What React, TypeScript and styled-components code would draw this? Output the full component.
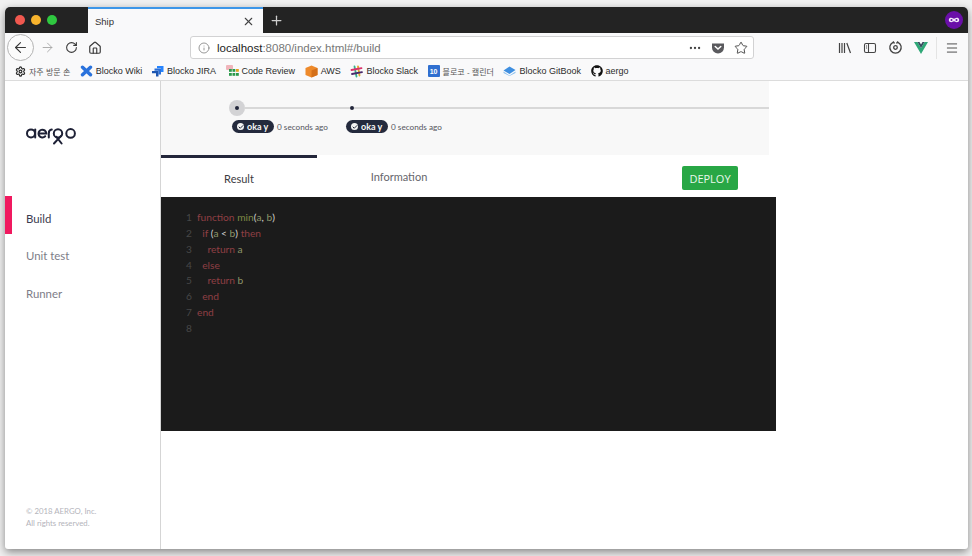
import React from "react";
import styled, { createGlobalStyle } from "styled-components";
import {
  ArrowLeft,
  ArrowRight,
  Check,
  Ellipsis,
  Home,
  Info,
  Menu,
  Plus,
  RotateCw,
  Settings,
  Star,
  X,
} from "lucide-react";
import { FaGithub } from "react-icons/fa";

const GlobalStyle = createGlobalStyle`
  html, body {
    margin: 0;
    height: 556px;
    overflow: hidden;
    background: #f1f1f1;
  }
  * {
    box-sizing: border-box;
  }
`;

const Page = styled.div`
  width: 972px;
  height: 556px;
  padding: 7px 4px 7px 5px;
  font-family: "Lato", "Liberation Sans", sans-serif;
`;

const Window = styled.div`
  height: 542px;
  display: flex;
  flex-direction: column;
  background: #fff;
  border-radius: 5px 5px 3px 3px;
  overflow: hidden;
  box-shadow: 0 3px 9px rgba(0, 0, 0, 0.45);
`;

const TabStrip = styled.div`
  height: 26px;
  flex: none;
  display: flex;
  align-items: stretch;
  background: #232323;
`;

const Lights = styled.div`
  width: 83px;
  display: flex;
  align-items: center;
  gap: 6px;
  padding-left: 10px;
`;

const Light = styled.span<{ $color: string }>`
  width: 10px;
  height: 10px;
  border-radius: 50%;
  background: ${({ $color }) => $color};
`;

const Tab = styled.div`
  width: 175px;
  display: flex;
  align-items: center;
  justify-content: space-between;
  padding: 0 8px 0 7px;
  background: #f9f9fa;
  border-top: 2px solid #3d96e8;
  font-size: 9.5px;
  color: #333;
  font-family: "Liberation Sans", sans-serif;
`;

const NewTab = styled.div`
  width: 26px;
  display: flex;
  align-items: center;
  justify-content: center;
  color: #cfcfcf;
`;

const MaskSlot = styled.div`
  margin-left: auto;
  padding-right: 5px;
  display: flex;
  align-items: center;
`;

const Toolbar = styled.div`
  height: 29px;
  flex: none;
  display: flex;
  align-items: center;
  background: #f9f9fa;
  color: #3a3a3a;
`;

const BackButton = styled.div`
  width: 27px;
  height: 27px;
  margin-left: 2px;
  flex: none;
  display: flex;
  align-items: center;
  justify-content: center;
  border: 1px solid #b3b3b3;
  border-radius: 50%;
  background: #fbfbfb;
`;

const NavIcons = styled.div`
  width: 68px;
  padding-left: 6px;
  display: flex;
  align-items: center;
  gap: 10px;
`;

const ForwardIcon = styled(ArrowRight)`
  color: #a9a9a9;
`;

const UrlBar = styled.div`
  width: 564px;
  height: 23px;
  margin-left: 88px;
  flex: none;
  display: flex;
  align-items: center;
  padding: 0 5px 0 7px;
  background: #fff;
  border: 1px solid #d2d2d3;
  border-radius: 3px;
  font-size: 11px;
  font-family: "Liberation Sans", sans-serif;
  color: #777;
`;

const UrlText = styled.span`
  margin-left: 7px;
  font-size: 11.5px;
  flex: 1;
`;

const UrlHost = styled.span`
  color: #222;
`;

const UrlActions = styled.div`
  display: flex;
  align-items: center;
  gap: 9px;
  color: #444;
`;

const ToolIcons = styled.div`
  margin-left: auto;
  display: flex;
  align-items: center;
  gap: 11px;
  padding-right: 9px;
  color: #444;
`;

const ToolDivider = styled.span`
  width: 1px;
  height: 22px;
  margin: 0 -3px;
  background: #e4e4e4;
`;

const Bookmarks = styled.div`
  height: 19px;
  flex: none;
  display: flex;
  align-items: center;
  padding-left: 10px;
  gap: 9.6px;
  background: #f9f9fa;
  border-bottom: 1px solid #dcdcdc;
  font-size: 9px;
  color: #2b2b2b;
  font-family: "Liberation Sans", "Noto Sans CJK KR", sans-serif;
`;

const Bookmark = styled.span`
  display: flex;
  align-items: center;
  gap: 3px;
  white-space: nowrap;
`;

const KoreanLabel = styled.span`
  font-size: 8px;
  color: #555;
`;

const Body = styled.div`
  flex: 1;
  min-height: 0;
  display: flex;
`;

const Sidebar = styled.aside`
  width: 156px;
  flex: none;
  display: flex;
  flex-direction: column;
  border-right: 1px solid #d5d5d5;
  padding-bottom: 20px;
`;

const LogoSlot = styled.div`
  height: 115px;
  padding: 46px 0 0 21px;
  flex: none;
`;

const NavList = styled.nav`
  display: flex;
  flex-direction: column;
`;

const NavItem = styled.div<{ $active?: boolean }>`
  height: 37.5px;
  display: flex;
  align-items: center;
  padding: 7px 0 0 ${({ $active }) => ($active ? "14px" : "21px")};
  font-size: 11.4px;
  color: ${({ $active }) => ($active ? "#3b3b4e" : "#7d7d88")};
  border-left: ${({ $active }) => ($active ? "7px solid #f0195f" : "none")};
`;

const Copyright = styled.div`
  margin-top: auto;
  padding-left: 21px;
  font-size: 7.8px;
  line-height: 12px;
  color: #b4b4bb;
`;

const Main = styled.main`
  width: 615px;
  flex: none;
  display: flex;
  flex-direction: column;
`;

const TimelinePanel = styled.section`
  width: 608px;
  height: 74px;
  flex: none;
  padding: 19px 0 0 68px;
  background: #f8f8f8;
`;

const Track = styled.div`
  height: 16px;
  display: flex;
  align-items: center;
`;

const BigDot = styled.span`
  width: 16px;
  height: 16px;
  flex: none;
  display: flex;
  align-items: center;
  justify-content: center;
  border-radius: 50%;
  background: #d3d3d5;

  &::after {
    content: "";
    width: 4px;
    height: 4px;
    border-radius: 50%;
    background: #22263a;
  }
`;

const SmallDot = styled.span`
  width: 4px;
  height: 4px;
  flex: none;
  border-radius: 50%;
  background: #22263a;
`;

const Connector = styled.span<{ $width?: number }>`
  height: 2px;
  background: #d8d8d8;
  ${({ $width }) => ($width ? `width: ${$width}px; flex: none;` : "flex: 1;")}
`;

const StepRow = styled.div`
  margin-top: 4px;
  padding-left: 3px;
  display: flex;
`;

const Step = styled.div`
  width: 114px;
  display: flex;
  align-items: center;
  gap: 3px;
`;

const Badge = styled.span`
  width: 42px;
  height: 13px;
  flex: none;
  display: flex;
  align-items: center;
  gap: 3px;
  padding-left: 5px;
  border-radius: 7px;
  background: #242a3d;
  color: #f7f7f7;
  font-size: 9px;
  font-weight: 700;
  white-space: nowrap;
`;

const BadgeCheck = styled.span`
  width: 7px;
  height: 7px;
  flex: none;
  display: flex;
  align-items: center;
  justify-content: center;
  border-radius: 50%;
  background: #f3f3f3;
  color: #242a3d;
`;

const Ago = styled.span`
  font-size: 8.2px;
  color: #55555d;
  white-space: nowrap;
`;

const TabBar = styled.div`
  height: 42px;
  flex: none;
  display: flex;
`;

const ResultTab = styled.div<{ $active?: boolean }>`
  width: 156px;
  display: flex;
  align-items: center;
  justify-content: center;
  font-size: 11px;
  padding-top: ${({ $active }) => ($active ? "1px" : "0")};
  color: ${({ $active }) => ($active ? "#3b3b3f" : "#66666c")};
  border-top: ${({ $active }) => ($active ? "3px solid #23263a" : "none")};
  margin-left: ${({ $active }) => ($active ? "0" : "4px")};
`;

const TabSpacer = styled.div`
  flex: 1;
  display: flex;
  align-items: center;
  justify-content: flex-end;
  padding: 4px 38px 0 0;
`;

const DeployButton = styled.button`
  width: 56px;
  height: 24px;
  padding: 0;
  border: none;
  border-radius: 2px;
  background: #28a745;
  color: #e9f7ec;
  font-family: "Open Sans", "Liberation Sans", sans-serif;
  font-size: 11px;
`;

const Editor = styled.section`
  height: 234px;
  flex: none;
  padding-top: 12.5px;
  background: #1b1b1b;
  font-size: 10.2px;
`;

const CodeLine = styled.div`
  height: 15.75px;
  display: flex;
  align-items: center;
  white-space: pre;
`;

const LineNo = styled.span`
  width: 36px;
  padding-right: 5px;
  flex: none;
  text-align: right;
  color: #474747;
`;

const Kw = styled.span`
  color: #8f3f44;
`;

const Fn = styled.span`
  color: #7d8a45;
`;

const Pun = styled.span`
  color: #d4d4d4;
`;

const Var = styled.span`
  color: #8d9468;
`;

// aergo wordmark, drawn to the reference's shapes
const AergoLogo = () => (
  <svg width="51" height="19" viewBox="0 0 51 19" fill="none" stroke="#1e2136" strokeWidth="2" strokeLinecap="round">
    <circle cx="5" cy="6.4" r="4" />
    <path d="M9.2 2.4v8.2" />
    <path d="M12.7 6.4h7.6a3.9 3.9 0 1 0-1.1 2.9" />
    <path d="M22.8 10.6V6.2a3.6 3.6 0 0 1 3-3.6" />
    <circle cx="32" cy="6.4" r="4.2" />
    <path d="M28 16.5l7-7.6M35.6 16.5l-5.400-6.800" />
    <circle cx="44.600" cy="6.400" r="4.300" />
  </svg>
);

const MaskIcon = () => (
  <svg width="18" height="18" viewBox="0 0 18 18">
    <circle cx="9" cy="9" r="9" fill="#6a0fa8" />
    <path d="M3.8 9c0-1.6 1.2-2.2 2.4-2.2S8 7.7 9 7.7s1.6-.9 2.8-.9 2.4.6 2.4 2.2-1.2 2.2-2.4 2.2S10 10.3 9 10.3s-1.6.9-2.8.9S3.800 10.600 3.800 9z" fill="#f4ecfa" />
    <circle cx="6.5" cy="9" r="1" fill="#6a0fa8" />
    <circle cx="11.5" cy="9" r="1" fill="#6a0fa8" />
  </svg>
);

const PocketIcon = () => (
  <svg width="14" height="14" viewBox="0 0 14 14">
    <path d="M1 2.5h12v4a6 6 0 0 1-12 0z" fill="#5a5a5e" />
    <path d="M4.2 5.5L7 8l2.8-2.500" fill="none" stroke="#fff" strokeWidth="1.5" strokeLinecap="round" />
  </svg>
);

const LibraryIcon = () => (
  <svg width="14" height="14" viewBox="0 0 14 14" fill="none" stroke="#444" strokeWidth="1.2">
    <path d="M1.500 2v10M4 2v10M6.5 2v10M8.800 2l3.700 10" />
  </svg>
);

const SidebarIcon = () => (
  <svg width="14" height="14" viewBox="0 0 14 14" fill="none" stroke="#444" strokeWidth="1.1">
    <rect x="1.5" y="2.5" width="11" height="9" rx="1.5" />
    <path d="M5.5 2.5v9M3 5h1M3 7h1" />
  </svg>
);

const SyncIcon = () => (
  <svg width="15" height="15" viewBox="0 0 15 15" fill="none" stroke="#444" strokeWidth="1.3">
    <path d="M5 2.3a5.7 5.7 0 1 0 5 0" />
    <path d="M5 1.500l1.500 2M10 1.500l-1.500 2" />
    <circle cx="7.5" cy="7.5" r="1.8" />
  </svg>
);

const VueIcon = () => (
  <svg width="14" height="13" viewBox="0 0 14 13">
    <path d="M0 1h3.5L7 7l3.500-6H14L7 13z" fill="#2fa878" />
    <path d="M3.500 1h2L7 3.600 8.500 1h2L7 7z" fill="#35495e" />
  </svg>
);

const WikiIcon = () => (
  <svg width="13" height="12" viewBox="0 0 13 12" fill="none" stroke="#2a72dc" strokeWidth="3.4" strokeLinecap="round">
    <path d="M2.500 2.200l8 7.600M10.500 2.200l-8 7.600" />
  </svg>
);

const JiraIcon = () => (
  <svg width="12" height="12" viewBox="0 0 12 12">
    <path d="M5 1h6.500v6H9V3.200H5z" fill="#2684ff" />
    <path d="M2.500 3.500H9v6H6.500V5.700h-4z" fill="#2a6fd6" />
    <path d="M0 6h6.500v5.500H4V8.200H0z" fill="#1c55b0" />
  </svg>
);

const ReviewIcon = () => (
  <svg width="13" height="12" viewBox="0 0 13 12">
    <rect x="0" y="0" width="7" height="5" rx="1" fill="#f0b5bb" />
    <rect x="3" y="4" width="2.8" height="2.8" fill="#2b9a4b" />
    <rect x="6.5" y="4" width="2.8" height="2.8" fill="#2b9a4b" />
    <rect x="10" y="4" width="2.8" height="2.8" fill="#e0a321" />
    <rect x="3" y="8" width="2.8" height="2.8" fill="#2b9a4b" />
    <rect x="6.5" y="8" width="2.8" height="2.8" fill="#2b9a4b" />
    <rect x="10" y="8" width="2.8" height="2.8" fill="#2b9a4b" />
  </svg>
);

const AwsIcon = () => (
  <svg width="13" height="13" viewBox="0 0 13 13">
    <path d="M6.500 0.500L12.500 3v7l-6 2.500L0.500 10V3z" fill="#ee8a2b" />
    <path d="M6.500 5.500L12.500 3v7l-6 2.500z" fill="#d4701a" />
  </svg>
);

const SlackIcon = () => (
  <svg width="13" height="13" viewBox="0 0 13 13" fill="none" strokeWidth="1.8" strokeLinecap="round">
    <path d="M4.500 1.500l2 10" stroke="#35b28c" />
    <path d="M8 1.500l1.500 9" stroke="#e2a82a" />
    <path d="M1.500 5l10-1.800" stroke="#d9326b" />
    <path d="M2 9l10-1.800" stroke="#4a2a6b" />
  </svg>
);

const CalendarBadge = styled.span`
  width: 12px;
  height: 12px;
  flex: none;
  display: flex;
  align-items: center;
  justify-content: center;
  border-radius: 1px;
  background: #2f6fd0;
  color: #fff;
  font-size: 7px;
  font-weight: 700;
`;

const GitBookIcon = () => (
  <svg width="13" height="10" viewBox="0 0 13 10">
    <path d="M0.500 4.500L6.500 0.500l6 3.500-6 4z" fill="#3f8fe0" />
    <path d="M0.500 5.500l6 4 6-4V7l-6 3-6-3z" fill="#8cc0ee" />
  </svg>
);

type CodePart = { kind: "kw" | "fn" | "pun" | "var"; text: string };

const PARTS = { kw: Kw, fn: Fn, pun: Pun, var: Var };

const kw = (text: string): CodePart => ({ kind: "kw", text });
const fn = (text: string): CodePart => ({ kind: "fn", text });
const pun = (text: string): CodePart => ({ kind: "pun", text });
const v = (text: string): CodePart => ({ kind: "var", text });

const CODE: CodePart[][] = [
  [kw("function "), fn("min"), pun("("), v("a"), pun(", "), v("b"), pun(")")],
  [kw("  if "), pun("("), v("a"), pun(" < "), v("b"), pun(") "), kw("then")],
  [kw("    return "), v("a")],
  [kw("  else")],
  [kw("    return "), v("b")],
  [kw("  end")],
  [kw("end")],
  [],
];

const STEPS = [0, 1];

export default function App() {
  return (
    <Page>
      <GlobalStyle />
      <Window>
        <TabStrip>
          <Lights>
            <Light $color="#f0584f" />
            <Light $color="#f7b32d" />
            <Light $color="#2fc840" />
          </Lights>
          <Tab>
            Ship
            <X size={13} color="#444" />
          </Tab>
          <NewTab>
            <Plus size={15} />
          </NewTab>
          <MaskSlot>
            <MaskIcon />
          </MaskSlot>
        </TabStrip>

        <Toolbar>
          <BackButton>
            <ArrowLeft size={17} strokeWidth={1.6} />
          </BackButton>
          <NavIcons>
            <ForwardIcon size={15} strokeWidth={1.5} />
            <RotateCw size={13} strokeWidth={2} />
            <Home size={14} strokeWidth={2} />
          </NavIcons>
          <UrlBar>
            <Info size={12} strokeWidth={1.5} />
            <UrlText>
              <UrlHost>localhost</UrlHost>:8080/index.html#/build
            </UrlText>
            <UrlActions>
              <Ellipsis size={14} />
              <PocketIcon />
              <Star size={14} strokeWidth={1.6} />
            </UrlActions>
          </UrlBar>
          <ToolIcons>
            <LibraryIcon />
            <SidebarIcon />
            <SyncIcon />
            <VueIcon />
            <ToolDivider />
            <Menu size={14} strokeWidth={1.6} />
          </ToolIcons>
        </Toolbar>

        <Bookmarks>
          <Bookmark>
            <Settings size={11} strokeWidth={2.6} />
            <KoreanLabel>자주 방문 손</KoreanLabel>
          </Bookmark>
          <Bookmark>
            <WikiIcon />
            Blocko Wiki
          </Bookmark>
          <Bookmark>
            <JiraIcon />
            Blocko JIRA
          </Bookmark>
          <Bookmark>
            <ReviewIcon />
            Code Review
          </Bookmark>
          <Bookmark>
            <AwsIcon />
            AWS
          </Bookmark>
          <Bookmark>
            <SlackIcon />
            Blocko Slack
          </Bookmark>
          <Bookmark>
            <CalendarBadge>10</CalendarBadge>
            <KoreanLabel>블로코 - 캘린더</KoreanLabel>
          </Bookmark>
          <Bookmark>
            <GitBookIcon />
            Blocko GitBook
          </Bookmark>
          <Bookmark>
            <FaGithub size={12} color="#111" />
            aergo
          </Bookmark>
        </Bookmarks>

        <Body>
          <Sidebar>
            <LogoSlot>
              <AergoLogo />
            </LogoSlot>
            <NavList>
              <NavItem $active>Build</NavItem>
              <NavItem>Unit test</NavItem>
              <NavItem>Runner</NavItem>
            </NavList>
            <Copyright>
              © 2018 AERGO, Inc.
              <br />
              All rights reserved.
            </Copyright>
          </Sidebar>

          <Main>
            <TimelinePanel>
              <Track>
                <BigDot />
                <Connector $width={105} />
                <SmallDot />
                <Connector />
              </Track>
              <StepRow>
                {STEPS.map((step) => (
                  <Step key={step}>
                    <Badge>
                      <BadgeCheck>
                        <Check size={6} strokeWidth={4} />
                      </BadgeCheck>
                      oka y
                    </Badge>
                    <Ago>0 seconds ago</Ago>
                  </Step>
                ))}
              </StepRow>
            </TimelinePanel>

            <TabBar>
              <ResultTab $active>Result</ResultTab>
              <ResultTab>Information</ResultTab>
              <TabSpacer>
                <DeployButton>DEPLOY</DeployButton>
              </TabSpacer>
            </TabBar>

            <Editor>
              {CODE.map((parts, i) => (
                <CodeLine key={i}>
                  <LineNo>{i + 1}</LineNo>
                  {parts.map((part, j) => {
                    const Part = PARTS[part.kind];
                    return <Part key={j}>{part.text}</Part>;
                  })}
                </CodeLine>
              ))}
            </Editor>
          </Main>
        </Body>
      </Window>
    </Page>
  );
}
